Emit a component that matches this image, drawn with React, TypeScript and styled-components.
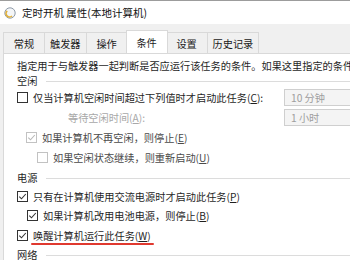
import React from 'react';
import styled, { createGlobalStyle } from 'styled-components';

const GlobalStyle = createGlobalStyle`
  html, body {
    margin: 0;
    padding: 0;
    overflow: hidden;
    background: #f0f0f0;
  }
  body {
    font-family: "Noto Sans CJK SC", "Noto Sans", sans-serif;
    font-size: 10.2px;
    color: #1f1f1f;
  }
`;

const Window = styled.div`
  width: 390px;
  height: 260px;
  background: #f0f0f0;
  border-top: 1px solid #9c9c9c;
  display: flex;
  flex-direction: column;
  overflow: hidden;
`;

const TitleBar = styled.div`
  height: 23px;
  flex-shrink: 0;
  background: #fff;
  display: flex;
  align-items: center;
  gap: 6px;
  padding-left: 4px;
  font-size: 10.5px;
  color: #111;
`;

const TabArea = styled.div`
  padding: 8px 0 0 3px;
  flex-shrink: 0;
`;

const TabStrip = styled.div`
  display: flex;
  align-items: flex-end;
  height: 21px;
`;

const Tab = styled.div<{ $active?: boolean }>`
  box-sizing: border-box;
  min-width: 42px;
  height: ${(p) => (p.$active ? '23px' : '21px')};
  padding: 0 5px;
  margin: ${(p) => (p.$active ? '0 -1px 0 -2px' : '0 0 0 -1px')};
  border: 1px solid #d9d9d9;
  border-bottom: none;
  background: ${(p) => (p.$active ? '#fff' : '#f0f0f0')};
  position: relative;
  z-index: ${(p) => (p.$active ? 1 : 0)};
  display: flex;
  align-items: center;
  justify-content: center;
  white-space: nowrap;
  color: #1a1a1a;
  &:first-child {
    margin-left: 0;
  }
`;

const Panel = styled.div`
  flex: 1;
  background: #fff;
  border-left: 1px solid #d9d9d9;
  border-top: 1px solid #d9d9d9;
  margin-left: 3px;
  padding: 4px 6px 0 13px;
  display: flex;
  flex-direction: column;
  overflow: hidden;
`;

const Row = styled.div<{ $h: number; $indent?: number }>`
  height: ${(p) => p.$h}px;
  flex-shrink: 0;
  display: flex;
  align-items: center;
  gap: 5px;
  padding-left: ${(p) => p.$indent ?? 0}px;
  white-space: nowrap;
`;

const GroupHeader = styled.div<{ $h: number }>`
  height: ${(p) => p.$h}px;
  flex-shrink: 0;
  display: flex;
  align-items: center;
  gap: 9px;
  color: #1f1f1f;
  &::after {
    content: '';
    flex: 1;
    height: 1px;
    margin-top: 3px;
    background: #dcdcdc;
  }
`;

const Label = styled.span<{ $tone?: 'normal' | 'muted' | 'faint' }>`
  color: ${(p) =>
    p.$tone === 'faint' ? '#a8a8a8' : p.$tone === 'muted' ? '#4a4a4a' : '#1f1f1f'};
`;

const Key = styled.u`
  text-decoration: underline;
  text-underline-offset: 1px;
`;

const Box = styled.span<{ $disabled?: boolean }>`
  box-sizing: border-box;
  width: 11px;
  height: 11px;
  flex-shrink: 0;
  border: 1px solid ${(p) => (p.$disabled ? '#c2c2c2' : '#333')};
  background: #fff;
  display: inline-flex;
  align-items: center;
  justify-content: center;
`;

const Select = styled.div`
  box-sizing: border-box;
  width: 100px;
  height: 17px;
  margin-left: auto;
  border: 1px solid #cfcfcf;
  background: #f4f4f4;
  color: #9e9e9e;
  padding-left: 6px;
  display: flex;
  align-items: center;
`;

const Marked = styled.span`
  position: relative;
  &::after {
    content: '';
    position: absolute;
    left: -2px;
    right: -3px;
    bottom: -2px;
    height: 2px;
    border-radius: 1px;
    background: #e0392f;
  }
`;

function ClockIcon() {
  return (
    <svg width="12" height="12" viewBox="0 0 12 12">
      <circle cx="6" cy="6" r="5.2" fill="#f4f6f8" stroke="#8e9aa8" strokeWidth="1" />
      <path d="M3.2 3.8 A3.4 3.4 0 0 0 8 9" fill="none" stroke="#e2b13a" strokeWidth="1.7" />
    </svg>
  );
}

function CheckBox({ checked, disabled }: { checked?: boolean; disabled?: boolean }) {
  return (
    <Box $disabled={disabled}>
      {checked && (
        <svg width="9" height="9" viewBox="0 0 9 9">
          <polyline
            points="1.3,4.6 3.5,6.8 7.8,2"
            fill="none"
            stroke={disabled ? '#b8b8b8' : '#333'}
            strokeWidth="1.1"
          />
        </svg>
      )}
    </Box>
  );
}

const tabs = ['常规', '触发器', '操作', '条件', '设置', '历史记录'];

export default function App() {
  return (
    <>
      <GlobalStyle />
      <Window>
        <TitleBar>
          <ClockIcon />
          <span>定时开机 属性(本地计算机)</span>
        </TitleBar>
        <TabArea>
          <TabStrip>
            {tabs.map((t) => (
              <Tab key={t} $active={t === '条件'}>
                {t}
              </Tab>
            ))}
          </TabStrip>
        </TabArea>
        <Panel>
          <Row $h={14}>
            <Label>指定用于与触发器一起判断是否应运行该任务的条件。如果这里指定的条件不为真，任务将不会运行。</Label>
          </Row>
          <GroupHeader $h={16}>空闲</GroupHeader>
          <Row $h={19}>
            <CheckBox />
            <Label>
              仅当计算机空闲时间超过下列值时才启动此任务(<Key>C</Key>):
            </Label>
            <Select>10 分钟</Select>
          </Row>
          <Row $h={20} $indent={51}>
            <Label $tone="faint">
              等待空闲时间(<Key>A</Key>):
            </Label>
            <Select>1 小时</Select>
          </Row>
          <Row $h={20} $indent={9}>
            <CheckBox checked disabled />
            <Label $tone="muted">
              如果计算机不再空闲，则停止(<Key>E</Key>)
            </Label>
          </Row>
          <Row $h={20} $indent={20}>
            <CheckBox disabled />
            <Label $tone="muted">
              如果空闲状态继续，则重新启动(<Key>U</Key>)
            </Label>
          </Row>
          <GroupHeader $h={20}>电源</GroupHeader>
          <Row $h={19}>
            <CheckBox checked />
            <Label>
              只有在计算机使用交流电源时才启动此任务(<Key>P</Key>)
            </Label>
          </Row>
          <Row $h={19} $indent={10}>
            <CheckBox checked />
            <Label>
              如果计算机改用电池电源，则停止(<Key>B</Key>)
            </Label>
          </Row>
          <Row $h={20}>
            <CheckBox checked />
            <Label>
              <Marked>
                唤醒计算机运行此任务(<Key>W</Key>)
              </Marked>
            </Label>
          </Row>
          <GroupHeader $h={18}>网络</GroupHeader>
        </Panel>
      </Window>
    </>
  );
}
